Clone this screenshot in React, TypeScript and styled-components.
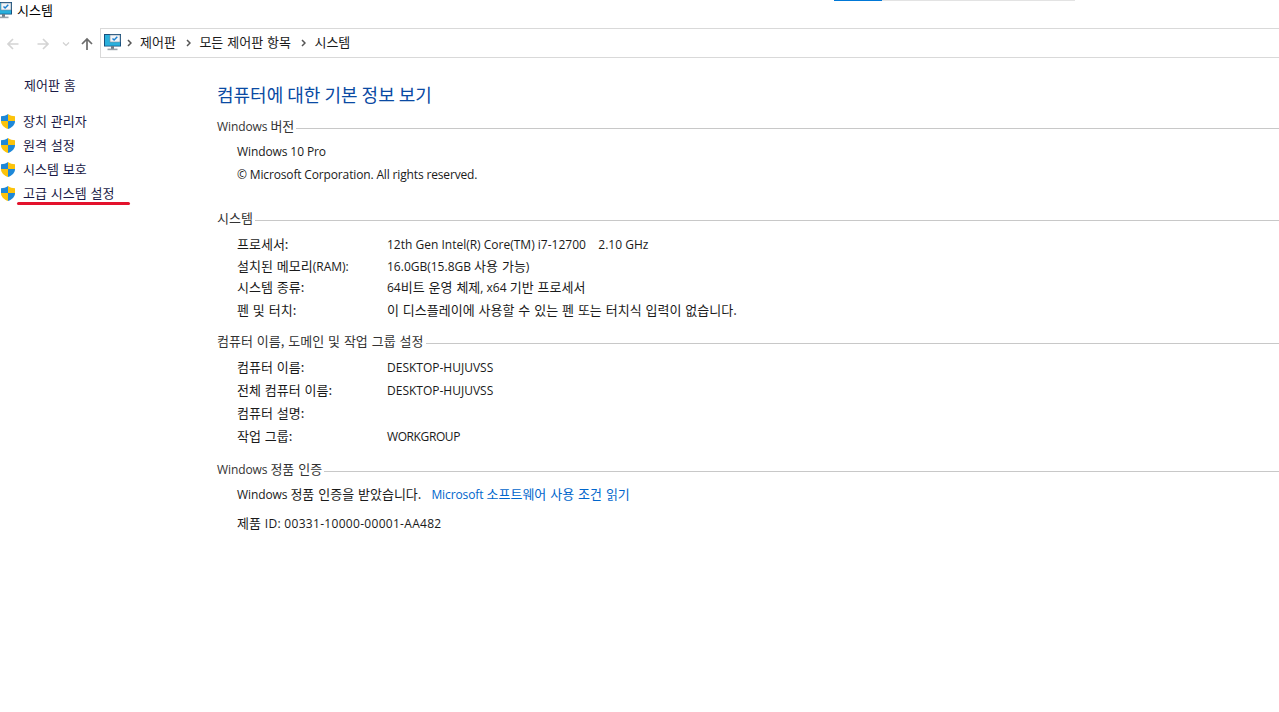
import React from "react";
import styled, { createGlobalStyle } from "styled-components";

const Global = createGlobalStyle`
  html, body { margin: 0; padding: 0; background: #fff; }
  body { font-family: "Noto Sans CJK KR", "Noto Sans", sans-serif; font-size: 13px; word-spacing: 1px; color: #1a1a1a; }
`;

const Page = styled.div`
  position: relative;
  width: 1279px;
  height: 712px;
  overflow: hidden;
`;

const Progress = styled.div`
  position: absolute;
  top: 0;
  left: 834px;
  width: 241px;
  height: 1px;
  background: linear-gradient(to right, #0078d7 48px, #e3e3e3 48px);
`;

const L = styled.span<{ $size?: number; $track?: number }>`
  font-family: "Open Sans", "Noto Sans CJK KR", sans-serif;
  font-size: ${(p) => p.$size ?? 12}px;
  letter-spacing: ${(p) => p.$track ?? 0}px;
  word-spacing: 0;
`;

const Value = styled(L)`
  margin-top: 1px;
`;

const TitleBar = styled.div`
  display: flex;
  align-items: center;
  height: 20px;
  gap: 5px;
  margin-left: -5px;
  color: #000;
`;

const TitleText = styled.span`
  margin-top: -2px;
`;

const NavBar = styled.div`
  display: flex;
  height: 30px;
  margin-top: 8px;
`;

const NavButtons = styled.div`
  display: flex;
  align-items: center;
  width: 100px;
  flex: none;
`;

const NavButton = styled.span<{ $w: number }>`
  display: flex;
  flex: none;
  justify-content: center;
  width: ${(p) => p.$w}px;
  margin-top: 2px;
`;

const AddressBox = styled.div`
  flex: 1;
  display: flex;
  align-items: center;
  border: 1px solid #d9d9d9;
  border-right: 0;
  padding-left: 3px;
  padding-bottom: 2px;
  color: #1a1a1a;
`;

const Crumb = styled.span`
  margin-left: 8.5px;
  margin-right: 10px;
  margin-top: -1px;
`;

const CaretMark = styled.svg`
  flex: none;
  margin-top: 1px;
`;

const RootCaret = styled.span`
  display: flex;
  margin-left: 5.5px;
`;

const Body = styled.div`
  display: flex;
`;

const Sidebar = styled.nav`
  width: 217px;
  flex: none;
  padding-top: 18px;
`;

const HomeLink = styled.div`
  padding-left: 24px;
  height: 18px;
  line-height: 18px;
  margin-bottom: 14px;
  color: #1a1a46;
`;

const SideLink = styled.div`
  position: relative;
  display: flex;
  align-items: center;
  gap: 7px;
  height: 24px;
  color: #1a1a46;
`;

const ShieldIcon = styled.svg`
  flex: none;
  margin-top: 3px;
`;

const Underline = styled.span`
  position: absolute;
  left: 17px;
  top: 22px;
  width: 113px;
  height: 3px;
  border-radius: 2px;
  background: #e3122c;
`;

const Main = styled.main`
  flex: 1;
  padding-top: 25px;
  min-width: 0;
`;

const Heading = styled.h1`
  margin: 0;
  font-size: 18px;
  font-weight: 400;
  word-spacing: 0;
  line-height: 22px;
  color: #0a4aa3;
`;

const Section = styled.section<{ $top: number }>`
  margin-top: ${(p) => p.$top}px;
`;

const SectionHead = styled.div`
  display: flex;
  align-items: center;
  height: 18px;
  color: #333;
`;

const HeadText = styled.span<{ $drop?: number }>`
  margin-top: ${(p) => p.$drop ?? 0}px;
`;

const Rule = styled.span`
  flex: 1;
  height: 1px;
  margin-left: 2px;
  margin-top: 6px;
  background: #c8c8c8;
`;

const Rows = styled.div<{ $top: number }>`
  padding-left: 20px;
  margin-top: ${(p) => p.$top}px;
`;

const Row = styled.div<{ $h?: number }>`
  display: grid;
  grid-template-columns: 150px 1fr;
  height: ${(p) => p.$h ?? 23}px;
  line-height: 18px;
  white-space: nowrap;
`;

const Line = styled.div<{ $h?: number }>`
  height: ${(p) => p.$h ?? 23}px;
  line-height: 18px;
  white-space: nowrap;
`;

const Link = styled.span`
  color: #0066cc;
  margin-left: 10px;
`;

const Shield = () => (
  <ShieldIcon width="16" height="17" viewBox="0 0 16 17">
    <path d="M8 1C6 2.6 3.6 3.2 1 3.2V8h7V1Z" fill="#1e88d8" />
    <path d="M8 1c2 1.6 4.4 2.2 7 2.2V8H8V1Z" fill="#fcc30b" />
    <path d="M1 8c0 3.8 3 6.6 7 8V8H1Z" fill="#fcc30b" />
    <path d="M15 8c0 3.8-3 6.6-7 8V8h7Z" fill="#1e88d8" />
  </ShieldIcon>
);

const Monitor = () => (
  <svg width="17" height="17" viewBox="0 0 17 17">
    <rect x="0.5" y="0.5" width="16" height="11.5" fill="#16a0d0" stroke="#17507e" />
    <path d="M1 1h15v10.5H1Z" fill="#2ab0dc" />
    <rect x="6" y="1" width="10" height="7" fill="#f2f5f8" stroke="#7a8a99" strokeWidth="0.6" />
    <path d="M8.5 4.5l1.6 1.6 3.2-3.4" fill="none" stroke="#1a7fd0" strokeWidth="1.4" />
    <rect x="7" y="12" width="3" height="3" fill="#6f7c88" />
    <rect x="3.5" y="14.6" width="10" height="1.6" fill="#9aa3ab" />
  </svg>
);

const Arrow = ({ dir, color }: { dir: "left" | "right" | "up"; color: string }) => {
  const d =
    dir === "left"
      ? "M12.5 7H2M7 2 2 7l5 5"
      : dir === "right"
      ? "M1.5 7H12M7 2l5 5-5 5"
      : "M7 13V2M2 7l5-5 5 5";
  return (
    <svg width="14" height="14" viewBox="0 0 14 14">
      <path d={d} fill="none" stroke={color} strokeWidth="1.7" />
    </svg>
  );
};

const Chevron = () => (
  <svg width="8" height="8" viewBox="0 0 8 8">
    <path d="M1 2.5 4 5.5 7 2.5" fill="none" stroke="#d0d0d0" strokeWidth="1.2" />
  </svg>
);

const Caret = () => (
  <CaretMark width="5" height="8" viewBox="0 0 5 8">
    <path d="M1 1 4 4 1 7" fill="none" stroke="#555" strokeWidth="1.5" />
  </CaretMark>
);

export default function App() {
  return (
    <Page>
      <Global />
      <Progress />
      <TitleBar>
        <Monitor />
        <TitleText>시스템</TitleText>
      </TitleBar>
      <NavBar>
        <NavButtons>
          <NavButton $w={26}>
            <Arrow dir="left" color="#d4d4d4" />
          </NavButton>
          <NavButton $w={34}>
            <Arrow dir="right" color="#d4d4d4" />
          </NavButton>
          <NavButton $w={12}>
            <Chevron />
          </NavButton>
          <NavButton $w={30}>
            <Arrow dir="up" color="#6b6b6b" />
          </NavButton>
        </NavButtons>
        <AddressBox>
          <Monitor />
          <RootCaret>
            <Caret />
          </RootCaret>
          <Crumb>제어판</Crumb>
          <Caret />
          <Crumb>모든 제어판 항목</Crumb>
          <Caret />
          <Crumb>시스템</Crumb>
        </AddressBox>
      </NavBar>
      <Body>
        <Sidebar>
          <HomeLink>제어판 홈</HomeLink>
          <SideLink>
            <Shield />
            장치 관리자
          </SideLink>
          <SideLink>
            <Shield />
            원격 설정
          </SideLink>
          <SideLink>
            <Shield />
            시스템 보호
          </SideLink>
          <SideLink>
            <Shield />
            고급 시스템 설정
            <Underline />
          </SideLink>
        </Sidebar>
        <Main>
          <Heading>컴퓨터에 대한 기본 정보 보기</Heading>
          <Section $top={11}>
            <SectionHead>
              <HeadText $drop={1}>
                <L $track={-0.1}>Windows&nbsp;</L>버전
              </HeadText>
              <Rule />
            </SectionHead>
            <Rows $top={8}>
              <Line>
                <L $track={-0.1}>Windows 10 Pro</L>
              </Line>
              <Line>
                <L $track={-0.15}>© Microsoft Corporation. All rights reserved.</L>
              </Line>
            </Rows>
          </Section>
          <Section $top={20}>
            <SectionHead>
              <HeadText>시스템</HeadText>
              <Rule />
            </SectionHead>
            <Rows $top={9}>
              <Row $h={22}>
                <span>프로세서:</span>
                <Value>12th Gen Intel(R) Core(TM) i7-12700 &nbsp;&nbsp; 2.10 GHz</Value>
              </Row>
              <Row $h={21}>
                <span>
                  설치된 메모리<L>(RAM):</L>
                </span>
                <span>
                  <L>16.0GB(15.8GB </L>사용 가능<L>)</L>
                </span>
              </Row>
              <Row>
                <span>시스템 종류:</span>
                <span>
                  <L>64</L>비트 운영 체제<L>, x64 </L>기반 프로세서
                </span>
              </Row>
              <Row>
                <span>펜 및 터치:</span>
                <span>이 디스플레이에 사용할 수 있는 펜 또는 터치식 입력이 없습니다.</span>
              </Row>
            </Rows>
          </Section>
          <Section $top={7}>
            <SectionHead>
              <HeadText>컴퓨터 이름, 도메인 및 작업 그룹 설정</HeadText>
              <Rule />
            </SectionHead>
            <Rows $top={9}>
              <Row>
                <span>컴퓨터 이름:</span>
                <Value>DESKTOP-HUJUVSS</Value>
              </Row>
              <Row>
                <span>전체 컴퓨터 이름:</span>
                <Value>DESKTOP-HUJUVSS</Value>
              </Row>
              <Row>
                <span>컴퓨터 설명:</span>
                <span />
              </Row>
              <Row>
                <span>작업 그룹:</span>
                <Value $track={-0.4}>WORKGROUP</Value>
              </Row>
            </Rows>
          </Section>
          <Section $top={9}>
            <SectionHead>
              <HeadText $drop={1}>
                <L $track={-0.1}>Windows&nbsp;</L>정품 인증
              </HeadText>
              <Rule />
            </SectionHead>
            <Rows $top={8}>
              <Line $h={29}>
                <L $track={-0.1}>Windows </L>정품 인증을 받았습니다.
                <Link>
                  <L $track={-0.1}>Microsoft </L>소프트웨어 사용 조건 읽기
                </Link>
              </Line>
              <Line>
                제품 <L $track={0.3}>ID: 00331-10000-00001-AA482</L>
              </Line>
            </Rows>
          </Section>
        </Main>
      </Body>
    </Page>
  );
}
